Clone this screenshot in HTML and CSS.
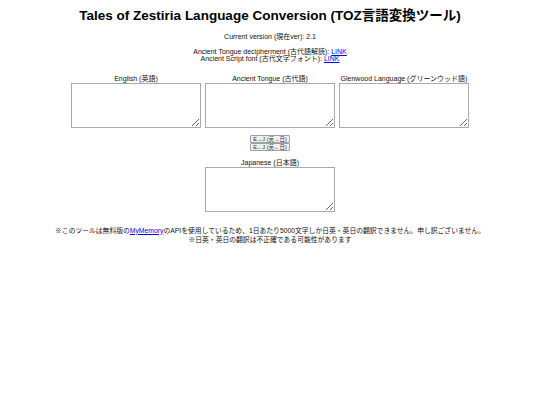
FILE: index.html
```html
<!DOCTYPE html>
<html>
<head>
<meta charset="utf-8">
<link rel="stylesheet" href="styles.css">
</head>
<body>
<h1 class="title">Tales of Zestiria Language Conversion (TOZ言語変換ツール)</h1>
<p class="version">Current version (現在ver): 2.1</p>
<p class="links">Ancient Tongue decipherment (古代語解読): <a href="#">LINK</a><br>Ancient Script font (古代文字フォント): <a href="#">LINK</a></p>
<div class="row">
  <div class="col"><div class="label">English (英語)</div><textarea class="box"></textarea></div>
  <div class="col"><div class="label">Ancient Tongue (古代語)</div><textarea class="box"></textarea></div>
  <div class="col"><div class="label">Glenwood Language (グリーンウッド語)</div><textarea class="box"></textarea></div>
</div>
<div class="buttons">
  <button class="btn">E→J (英→日)</button>
  <button class="btn">E←J (英←日)</button>
</div>
<div class="row single">
  <div class="col"><div class="label">Japanese (日本語)</div><textarea class="box"></textarea></div>
</div>
<p class="note">※このツールは無料版の<a href="#">MyMemory</a>のAPIを使用しているため、1日あたり5000文字しか日英・英日の翻訳できません。申し訳ございません。<br>※日英・英日の翻訳は不正確である可能性があります</p>
</body>
</html>
```
FILE: styles.css
```css
html, body {
  margin: 0;
  padding: 0;
  background: #fff;
}
body {
  font-family: "Liberation Sans", Arial, "Noto Sans CJK JP", sans-serif;
  font-size: 7px;
  line-height: 7.5px;
  color: #111;
  text-align: center;
}
.title {
  font-size: 13.5px;
  line-height: 16px;
  font-weight: bold;
  color: #000;
  margin: 8px 0 0;
}
.version {
  margin: 9px 0 0;
}
.links {
  margin: 7px 0 0;
}
a {
  color: #0000ee;
  text-decoration: underline;
}
.row {
  display: flex;
  justify-content: center;
  gap: 4px;
  margin-top: 12px;
}
.row.single {
  margin-top: 7px;
}
.col {
  display: flex;
  flex-direction: column;
  align-items: center;
}
.label {
  white-space: nowrap;
  margin-bottom: 0.5px;
}
.box {
  width: 130px;
  height: 45px;
  box-sizing: border-box;
  border: 1px solid #a9a9a9;
  padding: 1px;
  margin: 0;
  font-size: 7px;
  display: block;
}
.buttons {
  display: flex;
  flex-direction: column;
  align-items: center;
  gap: 0;
  margin-top: 7px;
}
.btn {
  font-family: "Liberation Sans", Arial, "Noto Sans CJK JP", sans-serif;
  font-size: 5.5px;
  line-height: 6px;
  height: 8px;
  padding: 0 2px;
  margin: 0 0 0.5px;
  border: 1px solid #a0a0a0;
  border-radius: 1px;
  background: #efefef;
  color: #333;
}
.note {
  font-size: 6.8px;
  line-height: 9px;
  margin: 14px 0 0;
}
```
